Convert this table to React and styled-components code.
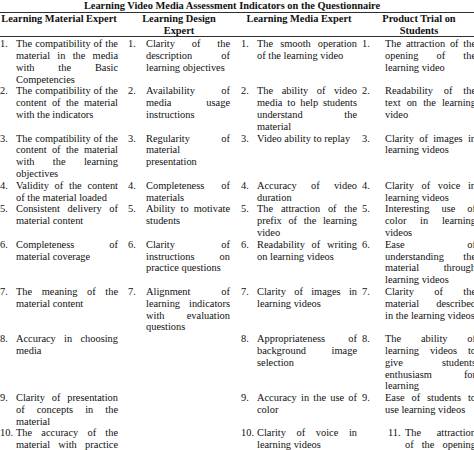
import React from 'react';
import styled, { createGlobalStyle } from 'styled-components';

const GlobalStyle = createGlobalStyle`
  html, body {
    margin: 0;
    padding: 0;
    background: #ffffff;
    overflow: hidden;
  }
`;

const COLUMNS = [
  { width: 128, num: 16, pad: 10 },
  { width: 113, num: 18, pad: 11 },
  { width: 121, num: 16, pad: 5 },
  { width: 118, num: 23, pad: 4 },
];

const template = COLUMNS.map((c) => `${c.width}px`).join(' ');

const HEADERS = [
  ['Learning Material Expert'],
  ['Learning Design', 'Expert'],
  ['Learning Media Expert'],
  ['Product Trial on', 'Students'],
];

const ITEMS = [
  [
    ['The compatibility of the', 'material in the media', 'with the Basic', 'Competencies'],
    ['The compatibility of the', 'content of the material', 'with the indicators'],
    ['The compatibility of the', 'content of the material', 'with the learning', 'objectives'],
    ['Validity of the content', 'of the material loaded'],
    ['Consistent delivery of', 'material content'],
    ['Completeness of', 'material coverage'],
    ['The meaning of the', 'material content'],
    ['Accuracy in choosing', 'media'],
    ['Clarity of presentation', 'of concepts in the', 'material'],
    ['The accuracy of the', 'material with practice', 'questions'],
  ],
  [
    ['Clarity of the', 'description of', 'learning objectives'],
    ['Availability of', 'media usage', 'instructions'],
    ['Regularity of', 'material', 'presentation'],
    ['Completeness of', 'materials'],
    ['Ability to motivate', 'students'],
    ['Clarity of', 'instructions on', 'practice questions'],
    ['Alignment of', 'learning indicators', 'with evaluation', 'questions'],
    null,
    null,
    null,
  ],
  [
    ['The smooth operation', 'of the learning video'],
    ['The ability of video', 'media to help students', 'understand the', 'material'],
    ['Video ability to replay'],
    ['Accuracy of video', 'duration'],
    ['The attraction of the', 'prefix of the learning', 'video'],
    ['Readability of writing', 'on learning videos'],
    ['Clarity of images in', 'learning videos'],
    ['Appropriateness of', 'background image', 'selection'],
    ['Accuracy in the use of', 'color'],
    ['Clarity of voice in', 'learning videos'],
  ],
  [
    ['The attraction of the', 'opening of the', 'learning video'],
    ['Readability of the', 'text on the learning', 'video'],
    ['Clarity of images in', 'learning videos'],
    ['Clarity of voice in', 'learning videos'],
    ['Interesting use of', 'color in learning', 'videos'],
    ['Ease of', 'understanding the', 'material through', 'learning videos'],
    ['Clarity of the', 'material described', 'in the learning videos'],
    ['The ability of', 'learning videos to', 'give students', 'enthusiasm for', 'learning'],
    ['Ease of students to', 'use learning videos'],
    { label: '11.', indent: 26, num: 17, lines: ['The attraction', 'of the opening', 'of the learning', 'video'] },
  ],
];

const Sheet = styled.div`
  width: 480px;
  font-family: "Liberation Serif", "Times New Roman", serif;
  font-size: 10.4px;
  color: #111111;
`;

const Title = styled.div`
  font-weight: 700;
  text-align: center;
  line-height: 12px;
  padding-right: 16px;
  border-bottom: 1px solid #2e2e2e;
`;

const Head = styled.div`
  display: grid;
  grid-template-columns: ${template};
  border-bottom: 1px solid #2e2e2e;
`;

const HeadCell = styled.div`
  font-weight: 700;
  text-align: center;
  line-height: 11.6px;
  padding-right: ${(p) => p.$pad}px;
`;

const Body = styled.div`
  display: grid;
  grid-template-columns: ${template};
  padding-top: 1px;
  line-height: 11.8px;
`;

const Cell = styled.div`
  display: flex;
  align-items: flex-start;
  padding-left: ${(p) => p.$indent || 0}px;
  padding-right: ${(p) => p.$pad}px;
`;

const Num = styled.span`
  flex: none;
  width: ${(p) => p.$w}px;
`;

const Text = styled.div`
  flex: 1;
  min-width: 0;
`;

const Line = styled.span`
  display: block;
  text-align: justify;
  text-align-last: ${(p) => (p.$last ? 'left' : 'justify')};
`;

function Item({ col, index, item }) {
  if (!item) return <Cell $pad={col.pad} />;
  const special = !Array.isArray(item);
  const lines = special ? item.lines : item;
  return (
    <Cell $pad={col.pad} $indent={special ? item.indent : 0}>
      <Num $w={special ? item.num : col.num}>{special ? item.label : `${index + 1}.`}</Num>
      <Text>
        {lines.map((l, i) => (
          <Line key={i} $last={i === lines.length - 1}>{l}</Line>
        ))}
      </Text>
    </Cell>
  );
}

export default function App() {
  const rows = ITEMS[0].map((_, r) => r);
  return (
    <>
      <GlobalStyle />
      <Sheet>
        <Title>Learning Video Media Assessment Indicators on the Questionnaire</Title>
        <Head>
          {HEADERS.map((h, i) => (
            <HeadCell key={i} $pad={COLUMNS[i].pad}>
              {h.map((l, j) => (
                <div key={j}>{l}</div>
              ))}
            </HeadCell>
          ))}
        </Head>
        <Body>
          {rows.map((r) =>
            COLUMNS.map((col, c) => (
              <Item key={`${r}-${c}`} col={col} index={r} item={ITEMS[c][r]} />
            ))
          )}
        </Body>
      </Sheet>
    </>
  );
}
